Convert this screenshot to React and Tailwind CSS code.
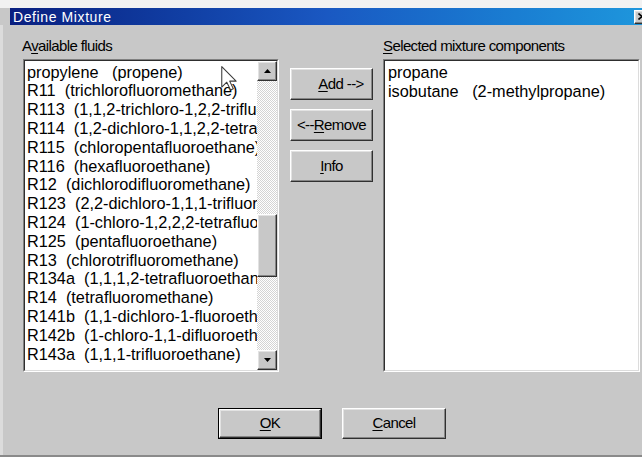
import React from 'react';

const fluids = [
  'propylene   (propene)',
  'R11  (trichlorofluoromethane)',
  'R113  (1,1,2-trichloro-1,2,2-trifluoroethane)',
  'R114  (1,2-dichloro-1,1,2,2-tetrafluoroethane)',
  'R115  (chloropentafluoroethane)',
  'R116  (hexafluoroethane)',
  'R12  (dichlorodifluoromethane)',
  'R123  (2,2-dichloro-1,1,1-trifluoroethane)',
  'R124  (1-chloro-1,2,2,2-tetrafluoroethane)',
  'R125  (pentafluoroethane)',
  'R13  (chlorotrifluoromethane)',
  'R134a  (1,1,1,2-tetrafluoroethane)',
  'R14  (tetrafluoromethane)',
  'R141b  (1,1-dichloro-1-fluoroethane)',
  'R142b  (1-chloro-1,1-difluoroethane)',
  'R143a  (1,1,1-trifluoroethane)',
];

const selected = ['propane', 'isobutane   (2-methylpropane)'];

// classic raised 3D bevel
const raised =
  'bg-[#c8c8c8] border border-t-white border-l-white border-r-[#303030] border-b-[#303030] shadow-[inset_-1px_-1px_0_#868686,inset_1px_1px_0_#e2e2e2]';

const track =
  'bg-[image:repeating-conic-gradient(#ffffff_0_25%,#d4d4d4_0_50%)] bg-[length:2px_2px]';

const Arrow = ({ down }) => (
  <svg width="7" height="4" viewBox="0 0 7 4">
    <polygon points={down ? '0,0 7,0 3.5,4' : '0,4 7,4 3.5,0'} fill="#000" />
  </svg>
);

const Button = ({ children, className = '' }) => (
  <div className={`${raised} flex items-center justify-center text-[15px] tracking-[-0.6px] text-black ${className}`}>
    {children}
  </div>
);

const Sunken = ({ children, className = '' }) => (
  <div className={`border border-t-[#808080] border-l-[#808080] border-r-white border-b-white ${className}`}>
    <div className="h-full border border-t-[#2e2e2e] border-l-[#2e2e2e] border-r-[#dcdcdc] border-b-[#dcdcdc] bg-white flex">
      {children}
    </div>
  </div>
);

const App = () => {
  return (
    <div className="relative w-[642px] h-[457px] overflow-hidden bg-[#c8c8c8] flex flex-col font-['Liberation_Sans',Arial,sans-serif] text-black select-none">
      <div className="h-[8px] bg-[#f2f2f2]" />

      {/* title bar */}
      <div className="ml-[10px] h-[17px] flex items-center bg-linear-to-r from-[#0a1f80] via-[#1a58c2] to-[#1e96dc]">
        <span className="pl-[3px] text-[14px] tracking-[0.6px] leading-none text-white">Define Mixture</span>
        <div className={`${raised} ml-auto mr-[-8px] w-[16px] h-[14px] flex items-center justify-center`}>
          <svg width="8" height="7" viewBox="0 0 8 7">
            <path d="M0.5 0.5 L7.5 6.5 M7.5 0.5 L0.5 6.5" stroke="#000" strokeWidth="1.6" />
          </svg>
        </div>
      </div>

      <div className="flex-1 flex flex-col border-l-[3px] border-[#dcdcdc] pl-[20px]">
        <div className="flex mt-[12px]">
          {/* available fluids */}
          <div className="w-[256px] shrink-0 flex flex-col">
            <div className="h-[18px] mb-[4px] ml-[-1px] text-[15px] tracking-[-0.6px] leading-[18px]">
              A<u className="underline-offset-2">v</u>ailable fluids
            </div>
            <Sunken className="h-[313px]">
              <div className="flex-1 min-w-0 overflow-hidden pl-[2px] pt-[1.6px] text-[16.3px] leading-[18.8px]">
                {fluids.map((f) => (
                  <div key={f} className="whitespace-pre overflow-hidden">{f}</div>
                ))}
              </div>
              <div className="w-[20px] shrink-0 flex flex-col">
                <div className={`${raised} h-[20px] shrink-0 flex items-center justify-center`}>
                  <Arrow />
                </div>
                <div className={`h-[133px] shrink-0 ${track}`} />
                <div className={`${raised} h-[63px] shrink-0`} />
                <div className={`flex-1 ${track}`} />
                <div className={`${raised} h-[20px] shrink-0 flex items-center justify-center`}>
                  <Arrow down />
                </div>
              </div>
            </Sunken>
          </div>

          {/* transfer buttons */}
          <div className="ml-[11px] w-[83px] shrink-0 pt-[31px] flex flex-col gap-[9px]">
            <Button className="h-[32px] pl-[19px]">
              <span><u className="underline-offset-2">A</u>dd --&gt;</span>
            </Button>
            <Button className="h-[32px]">
              <span>&lt;--<u className="underline-offset-2">R</u>emove</span>
            </Button>
            <Button className="h-[32px]">
              <span><u className="underline-offset-2">I</u>nfo</span>
            </Button>
          </div>

          {/* selected components */}
          <div className="ml-[10px] w-[257px] shrink-0 flex flex-col">
            <div className="h-[18px] mb-[4px] text-[15px] tracking-[-0.6px] leading-[18px]">
              <u className="underline-offset-2">S</u>elected mixture components
            </div>
            <Sunken className="h-[313px]">
              <div className="flex-1 pl-[3px] pt-[1.6px] text-[16.3px] leading-[19.4px]">
                {selected.map((s) => (
                  <div key={s} className="whitespace-pre">{s}</div>
                ))}
              </div>
            </Sunken>
          </div>
        </div>

        <div className="flex gap-[20px] mt-[36px] pl-[195px]">
          <div className="border border-black">
            <Button className="w-[102px] h-[29px]">
              <span><u className="underline-offset-2">O</u>K</span>
            </Button>
          </div>
          <Button className="w-[104px] h-[31px]">
            <span><u className="underline-offset-2">C</u>ancel</span>
          </Button>
        </div>
      </div>

      <div className="h-[2px] bg-[#8a8a8a]" />

      {/* mouse pointer */}
      <svg className="absolute left-[221px] top-[66px]" width="16" height="25" viewBox="0 0 12 19">
        <path
          d="M0.5 0.5 L0.5 16 L4.3 12.3 L7.2 18.3 L9.3 17.3 L6.5 11.5 L11.4 11.5 Z"
          fill="#fff"
          stroke="#3a3a3a"
          strokeWidth="0.8"
          strokeLinejoin="round"
        />
      </svg>
    </div>
  );
};

export default App;
